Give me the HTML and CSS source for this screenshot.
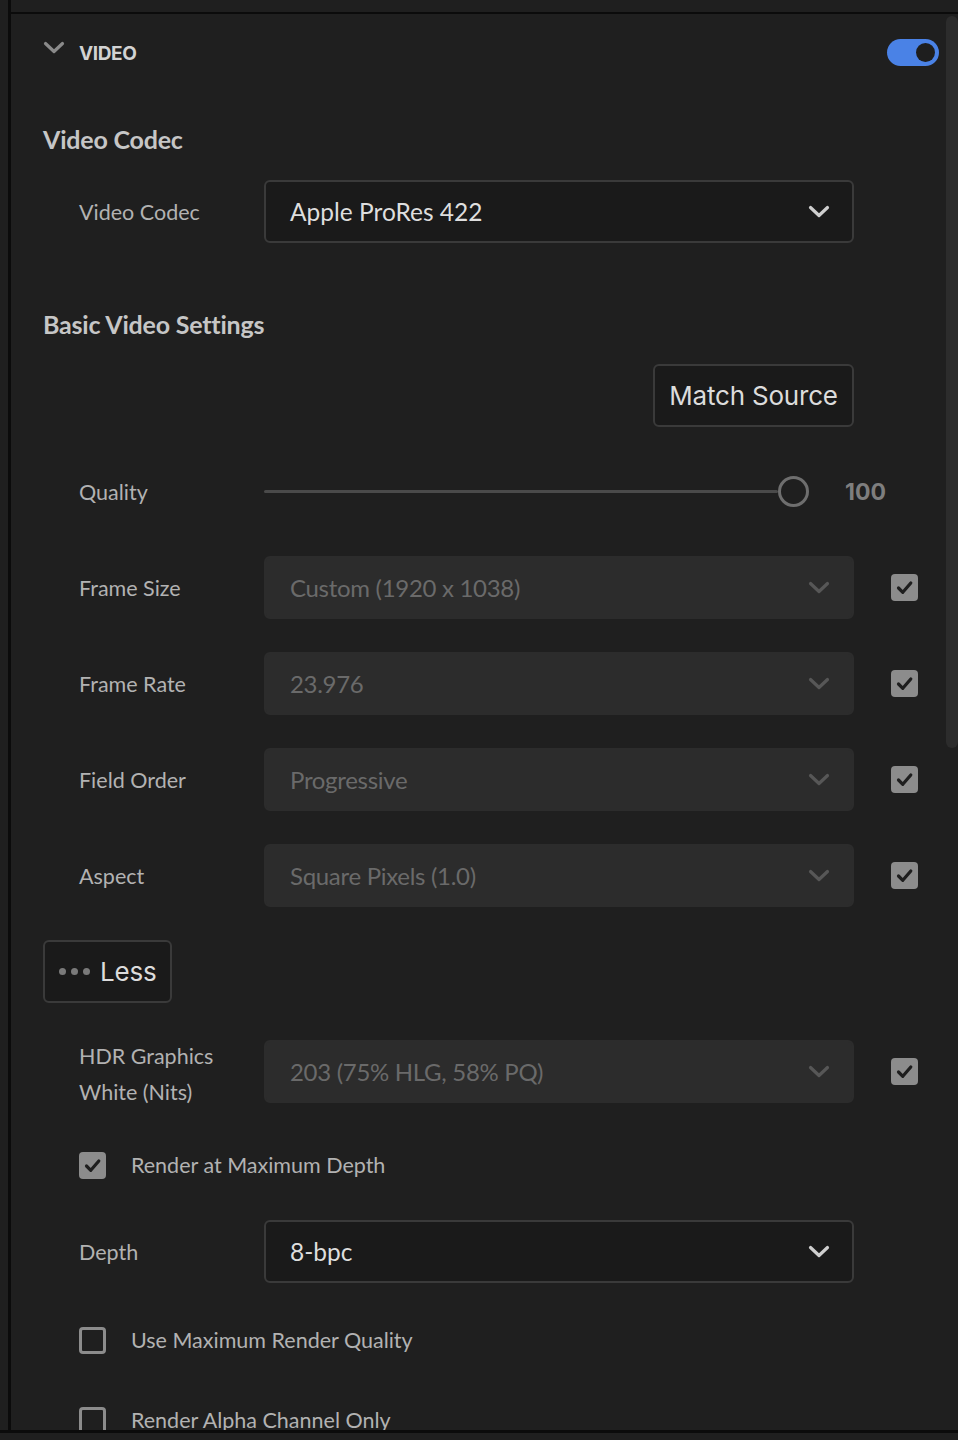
FILE: index.html
```html
<!DOCTYPE html>
<html lang="en">
<head>
    <meta charset="UTF-8">
    <meta name="viewport" content="width=device-width, initial-scale=1.0">
    <title>Export Settings - Video</title>
    <link rel="stylesheet" href="styles.css">
</head>
<body>
    <div class="screen">
        <div class="pane">
            <div class="panel">
                <div class="section-head">
                    <svg class="section-chevron" width="22" height="14" viewBox="0 0 22 14"><path d="M2.5 2.5 L11 10.5 L19.5 2.5" fill="none" stroke="#8a8a8a" stroke-width="3.2" stroke-linecap="round" stroke-linejoin="round"/></svg>
                    <span class="section-title">VIDEO</span>
                    <span class="toggle on"><span class="knob"></span></span>
                </div>

                <h2 class="group-title codec-title">Video Codec</h2>
                <div class="field">
                    <span class="label">Video Codec</span>
                    <div class="select">
                        <span>Apple ProRes 422</span>
                        <svg class="caret" width="22" height="14" viewBox="0 0 22 14"><path d="M2.5 2.5 L11 10.5 L19.5 2.5" fill="none" stroke="currentColor" stroke-width="3.2" stroke-linecap="round" stroke-linejoin="round"/></svg>
                    </div>
                </div>

                <h2 class="group-title basic-title">Basic Video Settings</h2>
                <div class="actions">
                    <button class="btn">Match Source</button>
                </div>

                <div class="field quality">
                    <span class="label">Quality</span>
                    <div class="slider-wrap">
                        <div class="slider">
                            <div class="track"></div>
                            <div class="thumb"></div>
                        </div>
                        <span class="slider-value">100</span>
                    </div>
                </div>

                <div class="field spaced">
                    <span class="label">Frame Size</span>
                    <div class="select disabled">
                        <span>Custom (1920 x 1038)</span>
                        <svg class="caret" width="22" height="14" viewBox="0 0 22 14"><path d="M2.5 2.5 L11 10.5 L19.5 2.5" fill="none" stroke="currentColor" stroke-width="3.2" stroke-linecap="round" stroke-linejoin="round"/></svg>
                    </div>
                    <span class="check checked"><svg width="27" height="27" viewBox="0 0 27 27"><path d="M7.5 14 L11.8 18.3 L19.8 9" fill="none" stroke="#1e1e1e" stroke-width="3.2" stroke-linecap="round" stroke-linejoin="round"/></svg></span>
                </div>

                <div class="field spaced">
                    <span class="label">Frame Rate</span>
                    <div class="select disabled">
                        <span>23.976</span>
                        <svg class="caret" width="22" height="14" viewBox="0 0 22 14"><path d="M2.5 2.5 L11 10.5 L19.5 2.5" fill="none" stroke="currentColor" stroke-width="3.2" stroke-linecap="round" stroke-linejoin="round"/></svg>
                    </div>
                    <span class="check checked"><svg width="27" height="27" viewBox="0 0 27 27"><path d="M7.5 14 L11.8 18.3 L19.8 9" fill="none" stroke="#1e1e1e" stroke-width="3.2" stroke-linecap="round" stroke-linejoin="round"/></svg></span>
                </div>

                <div class="field spaced">
                    <span class="label">Field Order</span>
                    <div class="select disabled">
                        <span>Progressive</span>
                        <svg class="caret" width="22" height="14" viewBox="0 0 22 14"><path d="M2.5 2.5 L11 10.5 L19.5 2.5" fill="none" stroke="currentColor" stroke-width="3.2" stroke-linecap="round" stroke-linejoin="round"/></svg>
                    </div>
                    <span class="check checked"><svg width="27" height="27" viewBox="0 0 27 27"><path d="M7.5 14 L11.8 18.3 L19.8 9" fill="none" stroke="#1e1e1e" stroke-width="3.2" stroke-linecap="round" stroke-linejoin="round"/></svg></span>
                </div>

                <div class="field spaced">
                    <span class="label">Aspect</span>
                    <div class="select disabled">
                        <span>Square Pixels (1.0)</span>
                        <svg class="caret" width="22" height="14" viewBox="0 0 22 14"><path d="M2.5 2.5 L11 10.5 L19.5 2.5" fill="none" stroke="currentColor" stroke-width="3.2" stroke-linecap="round" stroke-linejoin="round"/></svg>
                    </div>
                    <span class="check checked"><svg width="27" height="27" viewBox="0 0 27 27"><path d="M7.5 14 L11.8 18.3 L19.8 9" fill="none" stroke="#1e1e1e" stroke-width="3.2" stroke-linecap="round" stroke-linejoin="round"/></svg></span>
                </div>

                <button class="btn less-btn"><span class="dots"><i></i><i></i><i></i></span>Less</button>

                <div class="field hdr">
                    <span class="label two-line">HDR Graphics<br>White (Nits)</span>
                    <div class="select disabled">
                        <span>203 (75% HLG, 58% PQ)</span>
                        <svg class="caret" width="22" height="14" viewBox="0 0 22 14"><path d="M2.5 2.5 L11 10.5 L19.5 2.5" fill="none" stroke="currentColor" stroke-width="3.2" stroke-linecap="round" stroke-linejoin="round"/></svg>
                    </div>
                    <span class="check checked"><svg width="27" height="27" viewBox="0 0 27 27"><path d="M7.5 14 L11.8 18.3 L19.8 9" fill="none" stroke="#1e1e1e" stroke-width="3.2" stroke-linecap="round" stroke-linejoin="round"/></svg></span>
                </div>

                <div class="option max-depth">
                    <span class="check checked"><svg width="27" height="27" viewBox="0 0 27 27"><path d="M7.5 14 L11.8 18.3 L19.8 9" fill="none" stroke="#1e1e1e" stroke-width="3.2" stroke-linecap="round" stroke-linejoin="round"/></svg></span>
                    <span class="option-text">Render at Maximum Depth</span>
                </div>

                <div class="field depth">
                    <span class="label">Depth</span>
                    <div class="select">
                        <span>8-bpc</span>
                        <svg class="caret" width="22" height="14" viewBox="0 0 22 14"><path d="M2.5 2.5 L11 10.5 L19.5 2.5" fill="none" stroke="currentColor" stroke-width="3.2" stroke-linecap="round" stroke-linejoin="round"/></svg>
                    </div>
                </div>

                <div class="option max-quality">
                    <span class="check"></span>
                    <span class="option-text">Use Maximum Render Quality</span>
                </div>

                <div class="option alpha">
                    <span class="check"></span>
                    <span class="option-text">Render Alpha Channel Only</span>
                </div>
            </div>
            <div class="scroll-thumb"></div>
        </div>
    </div>
</body>
</html>
```

FILE: styles.css
```css
body {
    margin: 0;
    background-color: #1f1f1f;
    font-family: Lato, "Open Sans", sans-serif;
    color: #b4b4b4;
}
.screen {
    height: 1430px;
    border-bottom: 3px solid #0b0b0b;
    overflow: hidden;
}
.pane {
    position: relative;
    box-sizing: border-box;
    height: 1430px;
    margin-left: 8px;
    padding-top: 12px;
    border-left: 3px solid #0b0b0b;
    overflow: hidden;
}
.panel {
    border-top: 2px solid #0b0b0b;
    padding: 0 19px 0 32px;
}
.scroll-thumb {
    position: absolute;
    top: 16px;
    right: 0;
    width: 12px;
    height: 732px;
    background-color: #2c2c2c;
    border-radius: 6px;
}

/* section header */
.section-head {
    display: flex;
    align-items: center;
    height: 76px;
}
.section-chevron {
    margin-top: -8px;
}
.section-title {
    margin-left: 14px;
    margin-top: 2px;
    font-family: Inter, "Open Sans", sans-serif;
    font-weight: 700;
    font-size: 19px;
    letter-spacing: -0.4px;
    color: #d2d2d2;
}
.toggle {
    margin-left: auto;
    width: 52px;
    height: 27px;
    border-radius: 14px;
    background-color: #4a82e6;
    display: flex;
    align-items: center;
    justify-content: flex-end;
    padding-right: 4px;
    box-sizing: border-box;
}
.toggle .knob {
    width: 19px;
    height: 19px;
    border-radius: 50%;
    background-color: #1e1e1e;
}

.group-title {
    margin: 0;
    font-size: 25px;
    line-height: 30px;
    font-weight: 700;
    color: #c6c6c6;
    letter-spacing: -0.2px;
}
.codec-title {
    margin-top: 34px;
    margin-bottom: 26px;
}
.basic-title {
    margin-top: 66px;
    margin-bottom: 25px;
}

/* rows */
.field {
    display: grid;
    grid-template-columns: 185px 590px 64px;
    grid-template-rows: 63px;
    align-items: center;
    height: 63px;
    margin-left: 36px;
}
.field.spaced {
    margin-top: 33px;
}
.field.quality {
    margin-top: 33px;
}
.field.hdr {
    margin-top: 37px;
}
.field.depth {
    margin-top: 28px;
}
.label {
    font-size: 21.5px;
    color: #b2b2b2;
}
.label.two-line {
    line-height: 36px;
    padding-top: 4px;
}

.select {
    box-sizing: border-box;
    height: 63px;
    display: flex;
    align-items: center;
    justify-content: space-between;
    padding: 0 22px 0 24px;
    border: 2px solid #3a3a3a;
    border-radius: 6px;
    background-color: #1a1a1a;
    font-size: 24.5px;
    color: #dedede;
}
.select .caret {
    color: #cfcfcf;
}
.select.disabled {
    border-color: #2c2c2c;
    background-color: #2c2c2c;
    color: #6a6a6a;
    font-size: 24px;
    letter-spacing: -0.3px;
}
.select.disabled .caret {
    color: #575757;
}

.check {
    box-sizing: border-box;
    width: 27px;
    height: 27px;
    border: 3px solid #8c8c8c;
    border-radius: 4px;
    display: block;
}
.field .check {
    margin-left: 37px;
}
.check.checked {
    border: none;
    background-color: #8c8c8c;
}
.check svg {
    display: block;
}

/* buttons */
.actions {
    display: flex;
    justify-content: flex-end;
    width: 775px;
    margin-left: 36px;
}
.btn {
    box-sizing: border-box;
    height: 63px;
    padding: 0 14px;
    border: 2px solid #3a3a3a;
    border-radius: 6px;
    background-color: #1a1a1a;
    color: #dcdcdc;
    font-family: Inter, "Open Sans", sans-serif;
    font-size: 26px;
    letter-spacing: -0.2px;
}
.actions .btn {
    width: 201px;
}
.less-btn {
    display: flex;
    align-items: center;
    width: 129px;
    margin-top: 33px;
    padding: 0 14px;
}
.dots {
    display: flex;
    gap: 5px;
    margin-right: 10px;
}
.dots i {
    width: 7px;
    height: 7px;
    border-radius: 50%;
    background-color: #7a7a7a;
}

/* slider */
.slider-wrap {
    display: flex;
    align-items: center;
}
.slider {
    flex-shrink: 0;
    display: flex;
    align-items: center;
    width: 545px;
    height: 34px;
}
.track {
    flex: 1;
    height: 3px;
    background-color: #4a4a4a;
    border-radius: 2px;
}
.thumb {
    box-sizing: border-box;
    width: 31px;
    height: 31px;
    border: 3px solid #6e6e6e;
    border-radius: 50%;
    background-color: #1f1f1f;
}
.slider-value {
    flex-shrink: 0;
    margin-left: 36px;
    font-family: Inter, "Open Sans", sans-serif;
    font-weight: 700;
    font-size: 23px;
    color: #7e7e7e;
}

/* checkbox options */
.option {
    display: flex;
    align-items: center;
    height: 54px;
    margin-left: 36px;
}
.option-text {
    margin-left: 25px;
    font-size: 21.5px;
    color: #b2b2b2;
}
.option.max-depth {
    margin-top: 35px;
}
.option.max-quality {
    margin-top: 30px;
}
.option.alpha {
    margin-top: 26px;
}
```
